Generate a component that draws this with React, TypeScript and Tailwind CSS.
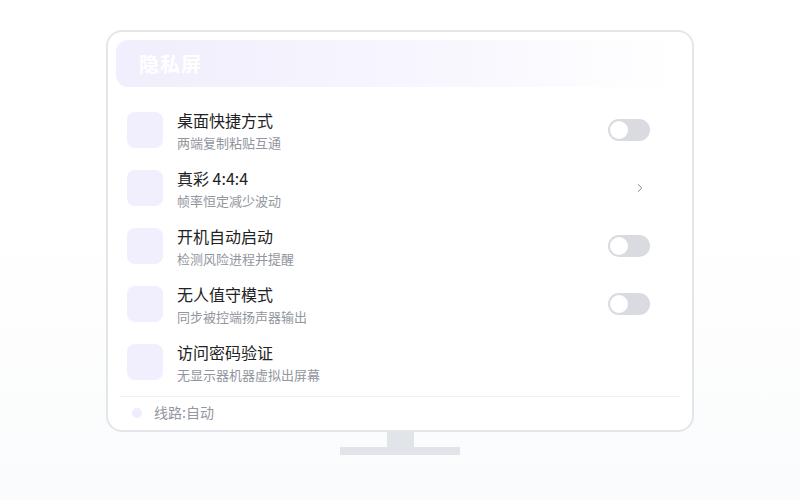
import React from "react";
import { ChevronRight } from "lucide-react";

type Row = { title: string; sub: string; action: "toggle" | "chevron" | "none" };

const rows: Row[] = [
    { title: "桌面快捷方式", sub: "两端复制粘贴互通", action: "toggle" },
    { title: "真彩 4:4:4", sub: "帧率恒定减少波动", action: "chevron" },
    { title: "开机自动启动", sub: "检测风险进程并提醒", action: "toggle" },
    { title: "无人值守模式", sub: "同步被控端扬声器输出", action: "toggle" },
    { title: "访问密码验证", sub: "无显示器机器虚拟出屏幕", action: "none" },
];

function Toggle() {
    return (
        <div className="w-[42px] h-[22px] rounded-full bg-[#d9dbe1] p-[2px] flex items-center">
            <div className="w-[18px] h-[18px] rounded-full bg-white" />
        </div>
    );
}

export default function App() {
    return (
        <div
            className="w-[800px] h-[500px] bg-gradient-to-b from-white from-45% to-[#fafbfc] flex flex-col items-center pt-[30px]"
            style={{ fontFamily: '"Noto Sans CJK SC", "Noto Sans", sans-serif' }}
        >
            {/* Monitor */}
            <div className="w-[588px] h-[402px] border-2 border-[#e3e6ea] rounded-[16px] bg-white flex flex-col px-2 pt-2">
                <div className="h-[47px] rounded-[12px] bg-gradient-to-r from-[#f1eefd] via-[#f7f5fe] to-white flex items-center pl-[23px] mr-[2px]">
                    <span className="text-white text-[20px] font-bold tracking-[1px]">隐私屏</span>
                </div>

                <div className="flex flex-col mt-[14px]">
                    {rows.map((r) => (
                        <div key={r.title} className="h-[58px] flex items-center pl-[11px] pr-[34px]">
                            <div className="w-[36px] h-[36px] rounded-[8px] bg-[#f1eefd] shrink-0" />
                            <div className="ml-[14px] flex flex-col flex-1 pt-[1px]">
                                <span className="text-[16px] leading-[22px] text-[#222222]">{r.title}</span>
                                <span className="text-[13px] leading-[18px] text-[#92969e] mt-[3px]">{r.sub}</span>
                            </div>
                            {r.action === "toggle" && <Toggle />}
                            {r.action === "chevron" && (
                                <div className="w-[42px] flex justify-end pr-[3px]">
                                    <ChevronRight size={14} strokeWidth={1.5} className="text-[#6b7280]" />
                                </div>
                            )}
                        </div>
                    ))}
                </div>

                <div className="mt-[5px] mx-[3px] border-t border-[#eef0f2] flex items-center h-[32px] pl-[13px]">
                    <div className="w-[10px] h-[10px] rounded-full bg-[#efedfc]" />
                    <span className="ml-[12px] text-[14px] text-[#92969e]">线路:自动</span>
                </div>
            </div>

            {/* Stand */}
            <div className="w-[27px] h-[15px] bg-[#e1e4e8]" />
            <div className="w-[120px] h-[8px] bg-[#e1e4e8]" />
        </div>
    );
}
